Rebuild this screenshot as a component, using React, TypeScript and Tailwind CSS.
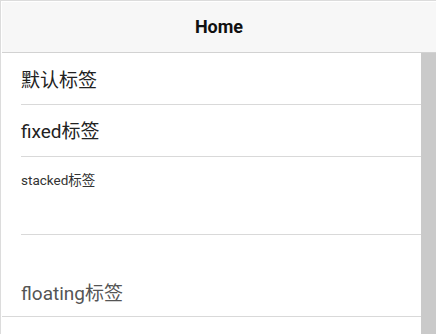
import React from "react";

const font = { fontFamily: "Roboto, 'Noto Sans CJK SC', sans-serif" };

export default function App() {
  return (
    <div
      className="w-[436px] h-[334px] overflow-hidden border-l border-t border-[#dcdcdc] bg-white pl-px pt-px flex flex-col"
      style={font}
    >
      <header className="h-[51px] shrink-0 bg-[#f7f7f7] border-b border-[#d2d2d2] flex items-center justify-center">
        <span className="text-[18px] font-bold text-[#111] leading-none">Home</span>
      </header>
      <div className="flex flex-1 min-h-0">
        <div className="flex-1 flex flex-col">
          <div className="pl-[19px]">
            <div className="h-[52px] border-b border-[#d9d9d9] flex items-center pt-[4px] text-[19px] text-[#222] leading-[24px]">
              默认标签
            </div>
          </div>
          <div className="pl-[19px]">
            <div className="h-[52px] border-b border-[#d9d9d9] flex items-center pt-[3px] text-[19px] text-[#222] leading-[24px]">
              fixed标签
            </div>
          </div>
          <div className="pl-[19px]">
            <div className="h-[78px] border-b border-[#d9d9d9] pt-[14px] text-[13.5px] text-[#333] leading-[18px]">
              stacked标签
            </div>
          </div>
          <div className="h-[82px] border-b border-[#d9d9d9] pl-[19px] flex items-end pb-[10px]">
            <span className="text-[19px] text-[#555] leading-[24px]">floating标签</span>
          </div>
        </div>
        <div className="w-[15px] shrink-0 bg-[#cacaca]" />
      </div>
    </div>
  );
}
